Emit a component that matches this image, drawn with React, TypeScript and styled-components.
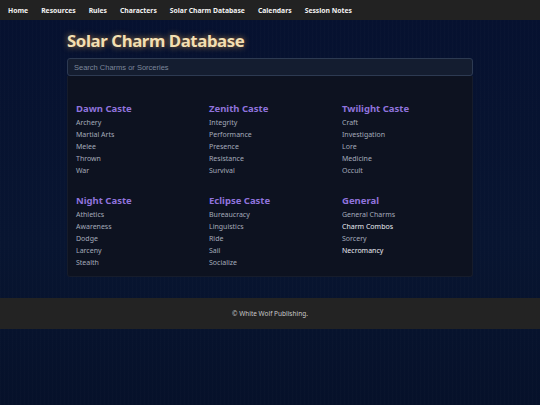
import styled, { createGlobalStyle } from 'styled-components';

const GlobalStyle = createGlobalStyle`
  html, body {
    margin: 0;
    padding: 0;
    background-color: #07122a;
  }
  body {
    font-family: 'Noto Sans', 'Open Sans', sans-serif;
    min-height: 405px;
    background:
      repeating-linear-gradient(90deg, rgba(255,255,255,0.012) 0 1px, transparent 1px 4px),
      linear-gradient(180deg, #061130 0%, #081531 60%, #06112a 100%);
  }
`;

const NavBar = styled.nav`
  height: 20px;
  background-color: #222222;
  display: flex;
  align-items: center;
  gap: 0 13px;
  padding: 0 8px;
`;

const NavLink = styled.a`
  color: #f2f2f2;
  font-size: 6.8px;
  font-weight: 700;
  text-decoration: none;
  white-space: nowrap;
`;

const Main = styled.main`
  width: 406px;
  margin: 0 auto;
  padding-top: 11px;
`;

const Title = styled.h1`
  margin: 0 0 7px;
  font-size: 16.8px;
  line-height: 20px;
  letter-spacing: -0.4px;
  font-weight: 700;
  color: #f3dfb2;
  text-shadow: 0 0 6px rgba(255, 186, 80, 0.65);
`;

const SearchInput = styled.input`
  box-sizing: border-box;
  display: block;
  width: 100%;
  height: 18px;
  padding: 0 6px;
  border: 1px solid #2d3a52;
  border-radius: 3px;
  background-color: #141d30;
  color: #d0d6e0;
  font-family: 'Liberation Sans', Arial, sans-serif;
  font-size: 7.5px;
  outline: none;

  &::placeholder {
    color: #7c879b;
  }
`;

const Panel = styled.section`
  box-sizing: border-box;
  background-color: #0d1220;
  border: 1px solid #161c2b;
  border-top: none;
  border-radius: 0 0 3px 3px;
  padding: 27px 8px 7px;
  display: grid;
  grid-template-columns: repeat(3, 133px);
  row-gap: 18px;
`;

const Group = styled.div`
  display: flex;
  flex-direction: column;
`;

const Heading = styled.h2`
  margin: 0 0 2px;
  font-size: 9.5px;
  line-height: 12px;
  font-weight: 700;
  color: #8f72dc;
`;

const Item = styled.a<{ $bright?: boolean }>`
  font-size: 7px;
  line-height: 12px;
  color: ${(p) => (p.$bright ? '#e9ebf2' : '#a4abba')};
  text-decoration: none;
`;

const Footer = styled.footer`
  margin-top: 21px;
  height: 31px;
  background-color: #232323;
  display: flex;
  align-items: center;
  justify-content: center;
  color: #c8c8c8;
  font-size: 6.5px;
`;

const groups: { title: string; items: { name: string; bright?: boolean }[] }[] = [
  { title: 'Dawn Caste', items: [{ name: 'Archery' }, { name: 'Martial Arts' }, { name: 'Melee' }, { name: 'Thrown' }, { name: 'War' }] },
  { title: 'Zenith Caste', items: [{ name: 'Integrity' }, { name: 'Performance' }, { name: 'Presence' }, { name: 'Resistance' }, { name: 'Survival' }] },
  { title: 'Twilight Caste', items: [{ name: 'Craft' }, { name: 'Investigation' }, { name: 'Lore' }, { name: 'Medicine' }, { name: 'Occult' }] },
  { title: 'Night Caste', items: [{ name: 'Athletics' }, { name: 'Awareness' }, { name: 'Dodge' }, { name: 'Larceny' }, { name: 'Stealth' }] },
  { title: 'Eclipse Caste', items: [{ name: 'Bureaucracy' }, { name: 'Linguistics' }, { name: 'Ride' }, { name: 'Sail' }, { name: 'Socialize' }] },
  {
    title: 'General',
    items: [
      { name: 'General Charms' },
      { name: 'Charm Combos', bright: true },
      { name: 'Sorcery' },
      { name: 'Necromancy', bright: true },
    ],
  },
];

const navItems = ['Home', 'Resources', 'Rules', 'Characters', 'Solar Charm Database', 'Calendars', 'Session Notes'];

function App() {
  return (
    <>
      <GlobalStyle />
      <NavBar>
        {navItems.map((n) => (
          <NavLink key={n} href="#">
            {n}
          </NavLink>
        ))}
      </NavBar>
      <Main>
        <Title>Solar Charm Database</Title>
        <SearchInput placeholder="Search Charms or Sorceries" />
        <Panel>
          {groups.map((g) => (
            <Group key={g.title}>
              <Heading>{g.title}</Heading>
              {g.items.map((i) => (
                <Item key={i.name} href="#" $bright={i.bright}>
                  {i.name}
                </Item>
              ))}
            </Group>
          ))}
        </Panel>
      </Main>
      <Footer>© White Wolf Publishing.</Footer>
    </>
  );
}

export default App;
